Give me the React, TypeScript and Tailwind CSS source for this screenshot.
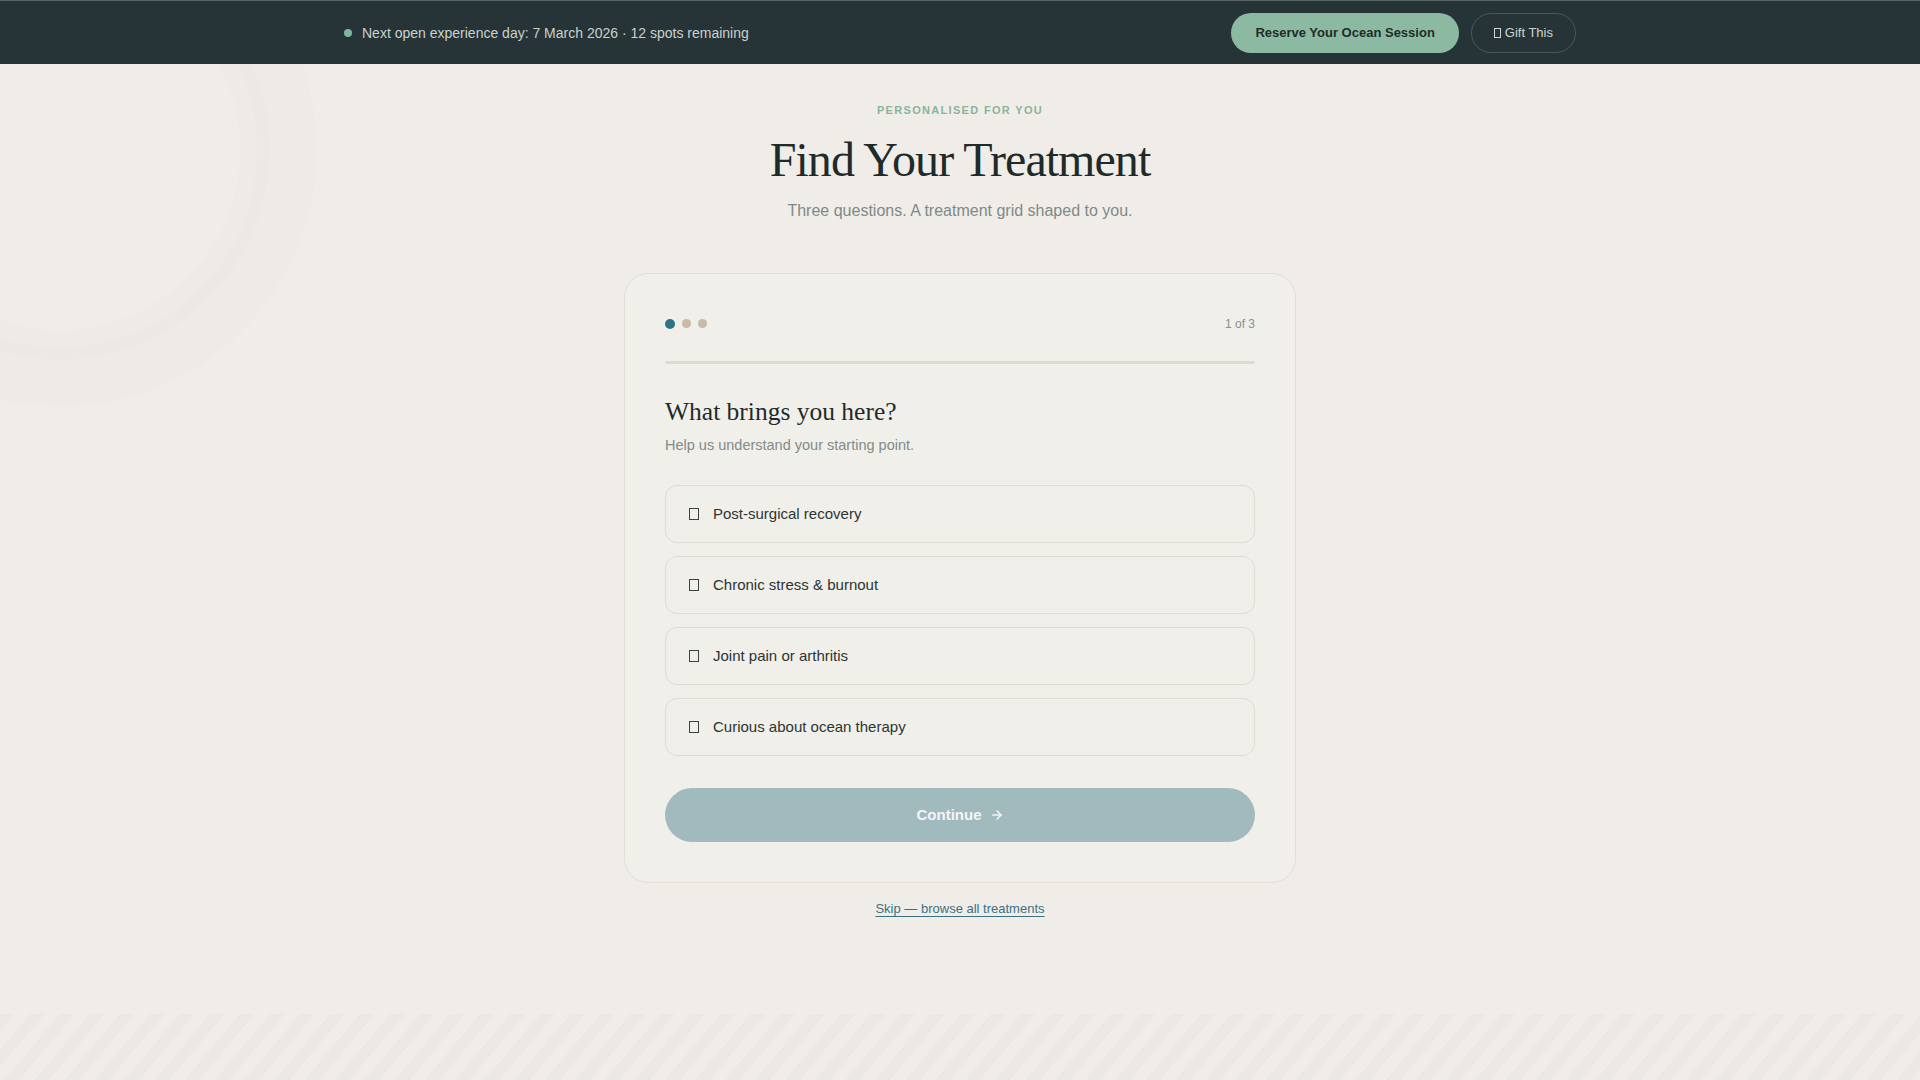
import React from 'react';
import { ArrowRight } from 'lucide-react';

const options = [
  'Post-surgical recovery',
  'Chronic stress & burnout',
  'Joint pain or arthritis',
  'Curious about ocean therapy',
];

// missing-glyph box, as the reference shows it
const Tofu: React.FC<{ className?: string }> = ({ className }) => (
  <span className={`inline-block shrink-0 border ${className ?? ''}`} />
);

const App: React.FC = () => {
  return (
    <div className="relative min-h-screen flex flex-col overflow-hidden bg-[#f0ede8] font-['Liberation_Sans',Arial,sans-serif]">
      {/* Background rings */}
      <div className="pointer-events-none absolute left-[-197px] top-[-107px] w-[514px] h-[514px] rounded-full border-[60px] border-[rgba(0,0,0,0.006)]"></div>
      <div className="pointer-events-none absolute left-[-150px] top-[-60px] w-[420px] h-[420px] rounded-full border-[30px] border-[rgba(0,0,0,0.006)]"></div>

      {/* Announcement bar */}
      <div className="relative z-10 bg-[#273437] border-t border-[#5a6567]">
        <div className="max-w-[1280px] mx-auto px-6 h-[63px] flex items-center justify-between">
          <div className="flex items-center gap-[10px] text-sm text-[#c9d1cd]">
            <span className="w-2 h-2 rounded-full bg-[#7fb59a]"></span>
            <span>Next open experience day: 7 March 2026 · 12 spots remaining</span>
          </div>
          <div className="flex items-center gap-3">
            <button className="h-10 px-6 rounded-full bg-[#8bb9a1] text-[13px] font-bold text-[#1e2d2b]">
              Reserve Your Ocean Session
            </button>
            <button className="h-10 px-[22px] rounded-full border border-[#4a5759] text-[13px] text-[#cdd4d1] flex items-center gap-1">
              <Tofu className="w-[7px] h-[10px] border-[#cdd4d1]" />
              Gift This
            </button>
          </div>
        </div>
      </div>

      {/* Quiz */}
      <main className="relative flex-1 flex flex-col items-center pt-[38px] px-6">
        <div className="text-[11px] leading-4 font-bold tracking-[0.12em] text-[#8ab49e]">PERSONALISED FOR YOU</div>
        <h1 className="mt-4 font-['Liberation_Serif','Times_New_Roman',serif] text-[48px] leading-[1.1] tracking-[-0.02em] text-[#1f2b2a]">
          Find Your Treatment
        </h1>
        <p className="mt-3 text-base text-[#7e8a87]">Three questions. A treatment grid shaped to you.</p>

        <div className="mt-[50px] w-full max-w-[672px] rounded-[24px] border border-[#e2ded7] bg-[#f1efea] p-10">
          <div className="h-5 flex items-center justify-between">
            <div className="flex items-center gap-[7px]">
              <span className="w-[10px] h-[10px] rounded-full bg-[#2c7386]"></span>
              <span className="w-[9px] h-[9px] rounded-full bg-[#c8baa6]"></span>
              <span className="w-[9px] h-[9px] rounded-full bg-[#c8baa6]"></span>
            </div>
            <span className="text-xs text-[#8a8f8c]">1 of 3</span>
          </div>

          <div className="mt-[27px] h-[3px] rounded-full bg-[#dedad3]"></div>

          <h2 className="mt-[31px] font-['Liberation_Serif','Times_New_Roman',serif] text-[25.5px] leading-[34px] text-[#1f2b2a]">
            What brings you here?
          </h2>
          <p className="mt-[6px] text-[14.5px] leading-5 text-[#838c89]">Help us understand your starting point.</p>

          <div className="mt-[30px] flex flex-col gap-[13px]">
            {options.map((opt) => (
              <button
                key={opt}
                className="h-[58px] w-full rounded-xl border border-[#dfdbd4] bg-[#f1efea] px-[23px] flex items-center gap-[14px] text-left text-[15px] text-[#2b3533]"
              >
                <Tofu className="w-[10px] h-[12px] border-[#3a4341]" />
                {opt}
              </button>
            ))}
          </div>

          <button className="mt-[32px] w-full h-[54px] rounded-full bg-[#a1babe] flex items-center justify-center gap-2 text-[15px] font-bold text-[#f3f6f6]">
            Continue
            <ArrowRight size={14} strokeWidth={2.5} />
          </button>
        </div>

        <a href="#" className="mt-4 text-[13px] text-[#3e7180] underline underline-offset-[3px]">
          Skip — browse all treatments
        </a>
      </main>

      {/* Striped footer band */}
      <div className="h-[66px] bg-[image:repeating-linear-gradient(130deg,rgba(0,0,0,0.018)_0px,rgba(0,0,0,0.018)_11px,transparent_11px,transparent_23px)]"></div>
    </div>
  );
};

export default App;
